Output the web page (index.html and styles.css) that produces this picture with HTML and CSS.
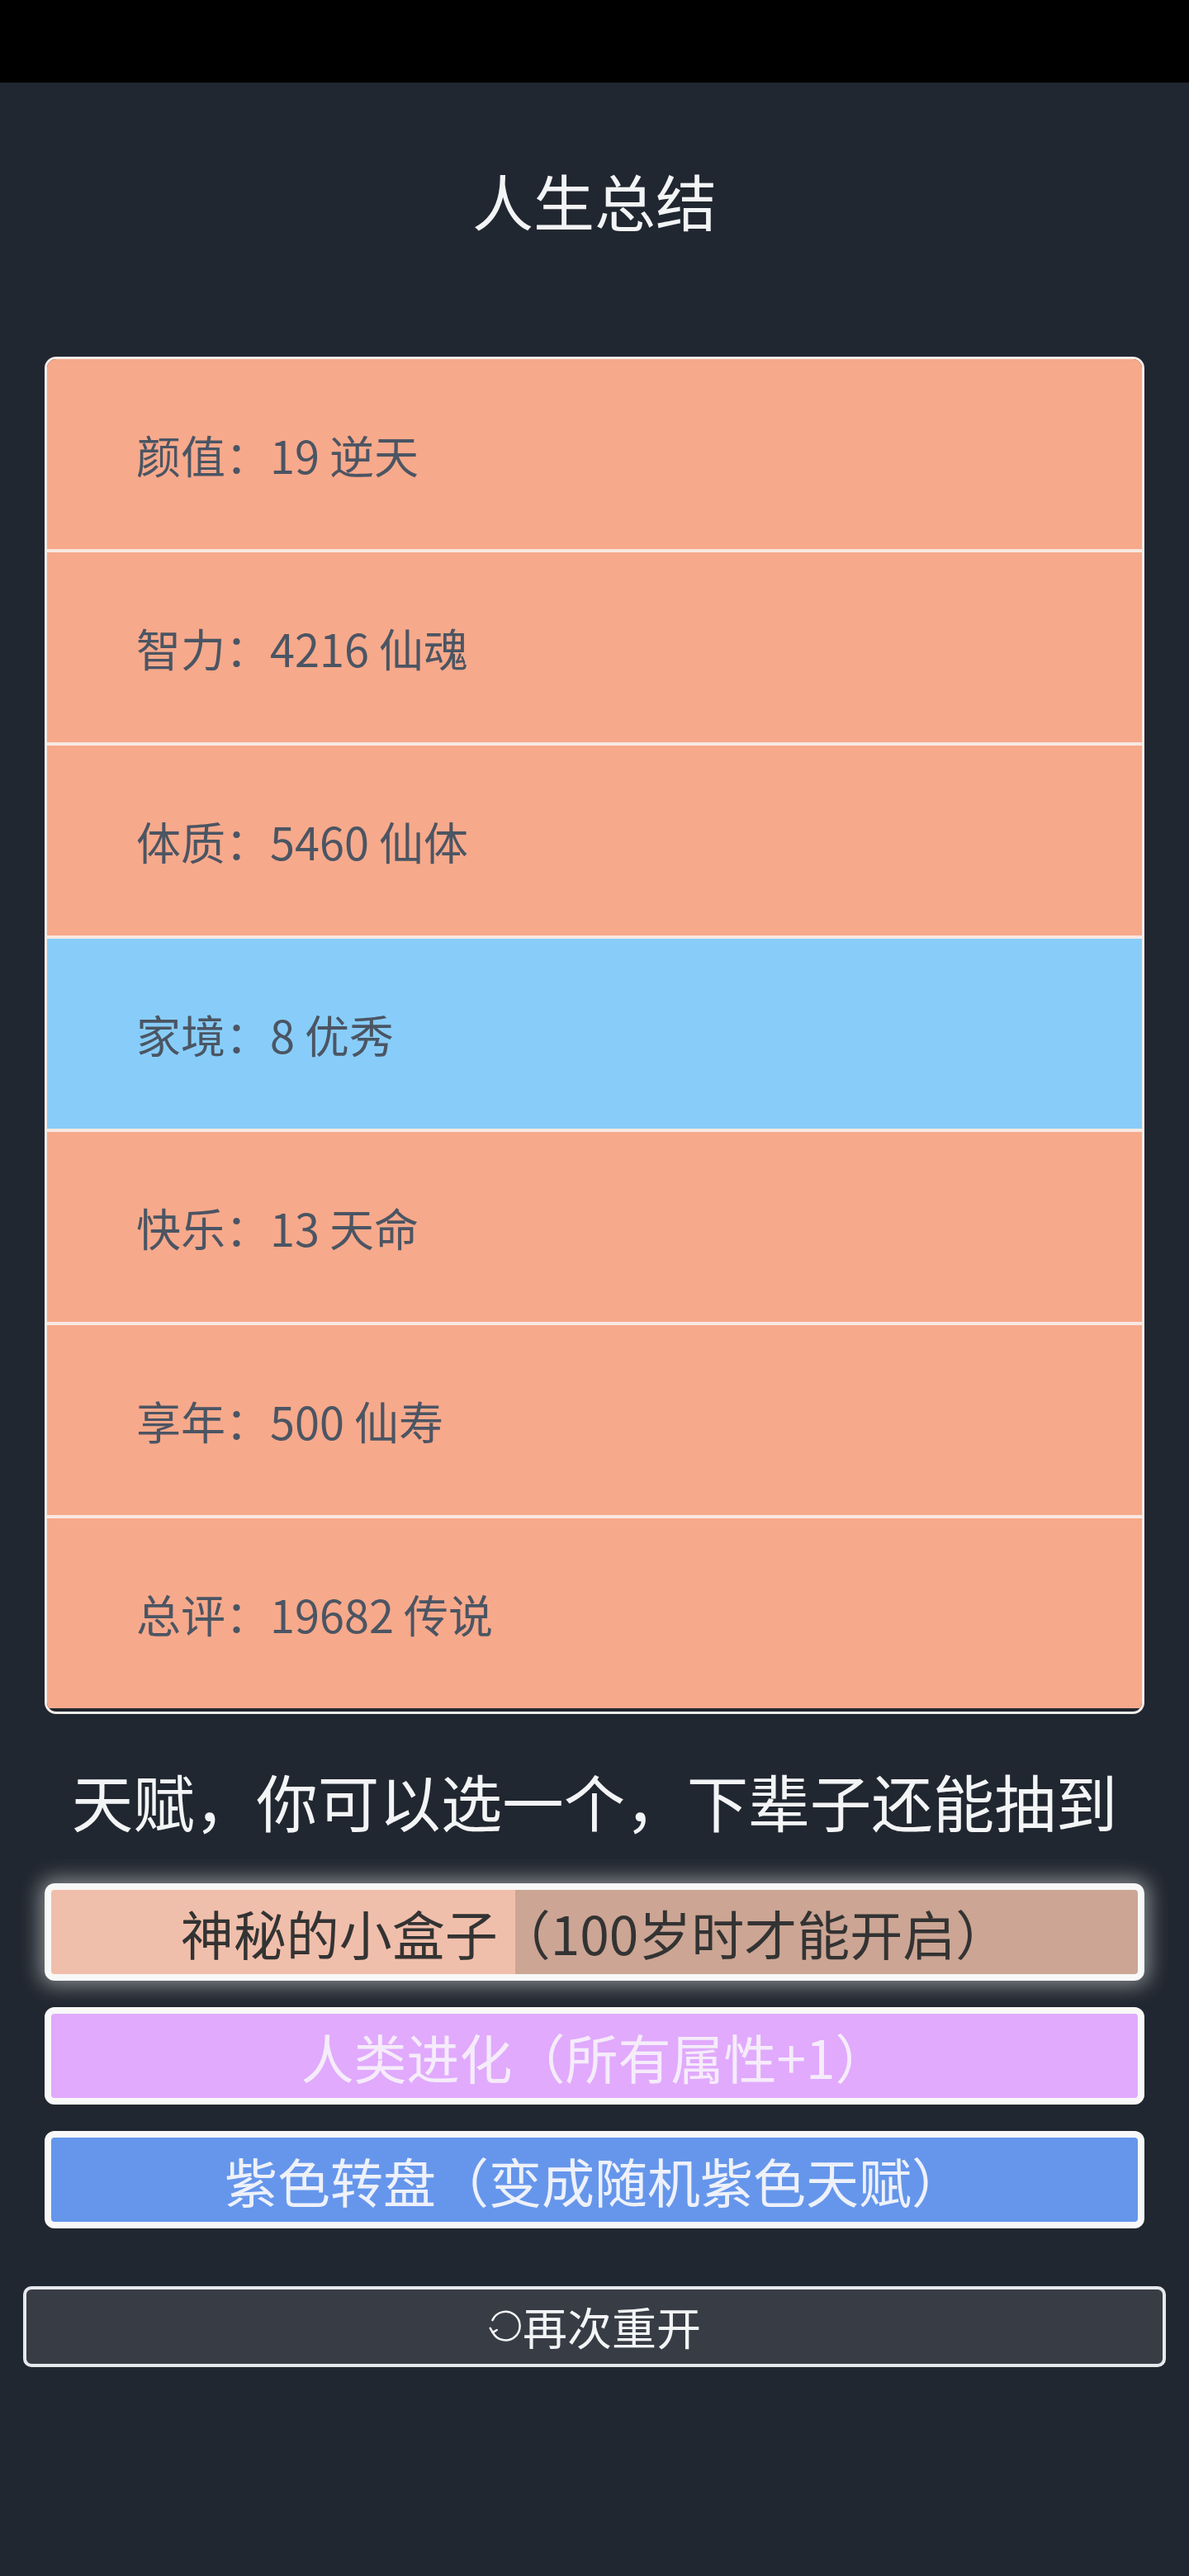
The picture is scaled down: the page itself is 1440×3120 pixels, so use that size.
FILE: index.html
```html
<!DOCTYPE html>
<html lang="zh-CN">

<head>
    <meta name="viewport" content="width=device-width, initial-scale=1">
    <meta charset="utf-8">
    <title>人生总结</title>
    <link rel="stylesheet" href="styles.css">
</head>

<body>
    <div class="status-bar"></div>

    <main class="summary">
        <h1 class="summary-title">人生总结</h1>

        <!-- Attribute results -->
        <ul class="stat-list">
            <li class="stat stat-orange">颜值：19 逆天</li>
            <li class="stat stat-orange">智力：4216 仙魂</li>
            <li class="stat stat-orange">体质：5460 仙体</li>
            <li class="stat stat-blue">家境：8 优秀</li>
            <li class="stat stat-orange">快乐：13 天命</li>
            <li class="stat stat-orange">享年：500 仙寿</li>
            <li class="stat stat-orange">总评：19682 传说</li>
        </ul>

        <h2 class="talent-title">天赋，你可以选一个，下辈子还能抽到</h2>

        <ul class="talent-list">
            <li class="talent talent-box selected">神秘的小盒子（100岁时才能开启）</li>
            <li class="talent talent-purple">人类进化（所有属性+1）</li>
            <li class="talent talent-blue">紫色转盘（变成随机紫色天赋）</li>
        </ul>

        <button class="restart-btn">
            <svg class="restart-icon" viewBox="0 0 40 40" width="42" height="42">
                <path d="M5.5 26.5 A16.5 16.5 0 1 0 5.2 12.5" fill="none" stroke="#f3f4f6" stroke-width="2.4" stroke-linecap="round" />
                <path d="M2.6 21.8 L5.5 26.8 L10.2 23.8" fill="none" stroke="#f3f4f6" stroke-width="2.4" stroke-linecap="round" stroke-linejoin="round" />
            </svg>
            <span>再次重开</span>
        </button>
    </main>
</body>

</html>
```

FILE: styles.css
```css
* {
    margin: 0;
    padding: 0;
    box-sizing: border-box;
}

html,
body {
    background: #212730;
    font-family: "Noto Sans CJK SC", "Noto Sans", sans-serif;
}

.status-bar {
    height: 100px;
    background: #000;
}

.summary {
    display: flex;
    flex-direction: column;
    align-items: center;
    padding: 105px 28px 200px;
}

/* Page title */
.summary-title {
    font-size: 74px;
    line-height: 1;
    font-weight: 400;
    color: #f3f4f6;
    margin-bottom: 153px;
}

/* Attribute list */
.stat-list {
    list-style: none;
    width: 1332px;
    border: 3px solid #f6ece8;
    border-radius: 14px;
    overflow: hidden;
}

.stat {
    height: 230px;
    display: flex;
    align-items: center;
    padding-left: 108px;
    font-size: 54px;
    color: #4b5563;
}

.stat + .stat {
    border-top: 4px solid #f8e8e2;
    height: 234px;
}

.stat:last-child {
    margin-bottom: 4px;
}

.stat-orange {
    background: #f7a98b;
}

.stat-blue {
    background: #88cdf9;
}

/* Talent choices */
.talent-title {
    margin-top: 68px;
    font-size: 74.5px;
    line-height: 1;
    font-weight: 400;
    color: #f3f4f6;
    white-space: nowrap;
}

.talent-list {
    list-style: none;
    width: 1332px;
    margin-top: 62px;
    display: flex;
    flex-direction: column;
    gap: 32px;
}

.talent {
    height: 118px;
    border: 8px solid #f8f8f8;
    border-radius: 12px;
    display: flex;
    align-items: center;
    justify-content: center;
    font-size: 64px;
    white-space: nowrap;
}

.talent-box {
    background: linear-gradient(to right, #f0bfab 42.7%, #cca594 42.7%);
    color: #333;
}

.talent-box.selected {
    box-shadow: 0 0 24px 6px rgba(255, 255, 255, 0.45);
}

.talent-purple {
    background: #e1aafd;
    color: #f5ecfa;
}

.talent-blue {
    background: #6596eb;
    color: #eef1fa;
}

/* Restart button */
.restart-btn {
    margin-top: 70px;
    width: 1384px;
    height: 98px;
    border: 4px solid #e6e8ec;
    border-radius: 10px;
    background: #383c45;
    color: #f3f4f6;
    font-family: inherit;
    font-size: 54px;
    display: flex;
    align-items: center;
    justify-content: center;
}
```
